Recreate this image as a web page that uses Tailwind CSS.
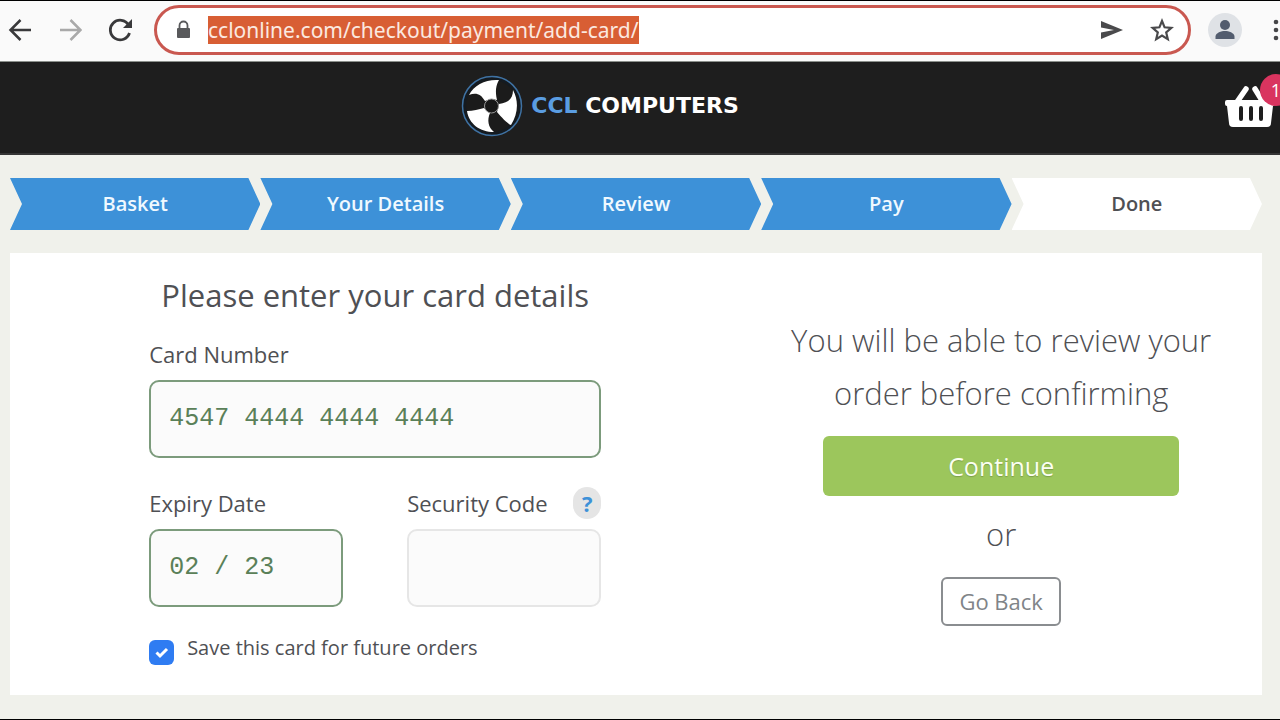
<!DOCTYPE html>
<html lang="en">
<head>
  <meta charset="UTF-8">
  <meta name="viewport" content="width=device-width, initial-scale=1.0">
  <title>CCL Computers - Add Card</title>
  <script src="https://cdn.jsdelivr.net/npm/@tailwindcss/browser@4"></script>
</head>
<body class="min-h-screen flex flex-col overflow-x-hidden bg-[#f0f1eb] border-y border-black font-['Open_Sans',sans-serif] text-[#4f5054]">

  <!-- Browser toolbar -->
  <div class="flex items-center h-[60px] bg-[#fafafa] pl-2 pb-[2px]">
    <nav class="flex items-center gap-[26px]" aria-label="Browser">
      <button aria-label="Back">
        <svg class="w-6 h-6" viewBox="0 0 24 24" fill="none" stroke="#39393b" stroke-width="2.5"><path d="M23 12H3M12.500 2L2.500 12l10 10"/></svg>
      </button>
      <button aria-label="Forward">
        <svg class="w-6 h-6" viewBox="0 0 24 24" fill="none" stroke="#a9a9a9" stroke-width="2.500"><path d="M2 12h20M12.500 2l10 10-10 10"/></svg>
      </button>
      <button aria-label="Reload">
        <svg class="w-6 h-6" viewBox="0 0 24 24" fill="none" stroke="#39393b" stroke-width="2.800"><path d="M20.600 7A9.800 9.800 0 1 0 21.500 15"/><path d="M24 1v9h-9z" fill="#39393b" stroke="none"/></svg>
      </button>
    </nav>
    <div class="flex flex-1 items-center h-[50px] ml-[22px] pl-[18px] pr-[14px] rounded-full border-[3px] border-[#c95850] bg-white">
      <svg class="w-4 h-5 shrink-0" viewBox="0 0 16 20"><rect x="2" y="8" width="13" height="10" rx="1" fill="#58595b"/><path d="M4.500 9V5.500a4 4 0 0 1 8 0V9" fill="none" stroke="#58595b" stroke-width="1.800"/></svg>
      <div class="flex flex-1 ml-[17px]">
        <span class="h-7 leading-7 bg-[#d85e34] text-[#fbe9e0] text-[21px] font-['Noto_Sans',sans-serif]">cclonline.com/checkout/payment/add-card/</span>
      </div>
      <button aria-label="Send">
        <svg class="w-6 h-6" viewBox="0 0 24 24" fill="#4a4a4c"><path d="M1 3l22 9-22 9v-6.500l13-2.500-13-2.500z"/></svg>
      </button>
      <button class="ml-[26px]" aria-label="Bookmark">
        <svg class="w-6 h-6" viewBox="0 0 24 24" fill="none" stroke="#4a4a4c" stroke-width="2.200"><path d="M12 3l2.600 6.300 6.800.6-5.200 4.500 1.600 6.700L12 17.500l-5.800 3.600 1.600-6.700-5.200-4.500 6.800-.6z"/></svg>
      </button>
    </div>
    <button class="ml-[17px] shrink-0" aria-label="Profile">
      <svg class="w-[34px] h-[34px]" viewBox="0 0 34 34"><circle cx="17" cy="17" r="17" fill="#dfe2e6"/><circle cx="17" cy="12" r="5" fill="#525c6e"/><path d="M7.500 26v-2.500c0-3.700 6-5.500 9.500-5.500s9.500 1.800 9.500 5.500V26z" fill="#525c6e"/></svg>
    </button>
    <button class="ml-[30px] -mr-[1px] shrink-0" aria-label="Menu">
      <svg class="w-[9px] h-6" viewBox="0 0 9 24" fill="#454547"><circle cx="4" cy="4" r="2.300"/><circle cx="4" cy="12" r="2.300"/><circle cx="4" cy="20" r="2.300"/></svg>
    </button>
  </div>

  <!-- Site header -->
  <header class="relative flex items-center h-[94px] bg-[#1e1e1e] border-t border-b-2 border-t-[#8c908c] border-b-[#353535]">
    <div class="flex flex-1 justify-center">
      <a href="#" class="flex items-center gap-2 -ml-20 -mt-1 font-['DejaVu_Sans',sans-serif] font-bold text-[22px] text-white">
        <svg class="w-[62px] h-[62px]" viewBox="0 0 62 62">
          <circle cx="31" cy="31" r="29.500" fill="#141a20" stroke="#3f72a3" stroke-width="1.500"/>
          <circle cx="31" cy="31" r="26" fill="#1b1b1b"/>
          <g fill="#fff">
            <path d="M8 20C13 10 25 4 38 5C35 10 34 16 36 25L31 24L24 26C20 19 15 17 8 20Z"/>
            <path d="M52 15C58 26 57 39 50 50C47 49 41 43 36 37L38 29C48 28 52 23 52 15Z"/>
            <path d="M6 36C8 49 19 57 33 57C27 52 26 45 29 38L23 33C18 34 12 36 6 36Z"/>
          </g>
          <circle cx="30.500" cy="31" r="7" fill="#171717" stroke="#999" stroke-width="1"/>
        </svg>
        <span><span class="text-[#5a9de2]">CCL</span> COMPUTERS</span>
      </a>
    </div>
    <a href="#" class="absolute right-1 top-[22px]" aria-label="Basket">
      <svg class="w-[52px] h-[44px]" viewBox="0 0 52 44">
        <path d="M13 18l9-13M39 18L31 5" stroke="#fff" stroke-width="5.500" stroke-linecap="round"/>
        <path d="M3 16h46a2 2 0 0 1 2 2v2a2 2 0 0 1-2 2l-2 17a4 4 0 0 1-4 4H9a4 4 0 0 1-4-4L3 22a2 2 0 0 1-2-2v-2a2 2 0 0 1 2-2z" fill="#fff"/>
        <path d="M17 24v11M27 24v11M37 24v11" stroke="#1e1e1e" stroke-width="4" stroke-linecap="round"/>
      </svg>
      <span class="absolute -top-[10px] -right-4 w-8 h-8 rounded-full bg-[#d9345f] text-white text-lg leading-8 text-center">1</span>
    </a>
  </header>

  <main class="pl-[10px] pr-[18px] pt-[23px] pb-5">
    <!-- Checkout steps -->
    <ol class="grid grid-cols-5 text-xl font-semibold text-center leading-[52px] text-[#f0f9ff]">
      <li class="bg-[#3d91d8] [clip-path:polygon(0_0,calc(100%_-_12px)_0,100%_50%,calc(100%_-_12px)_100%,0_100%,12px_50%)]">Basket</li>
      <li class="bg-[#3d91d8] [clip-path:polygon(0_0,calc(100%_-_12px)_0,100%_50%,calc(100%_-_12px)_100%,0_100%,12px_50%)]">Your Details</li>
      <li class="bg-[#3d91d8] [clip-path:polygon(0_0,calc(100%_-_12px)_0,100%_50%,calc(100%_-_12px)_100%,0_100%,12px_50%)]">Review</li>
      <li class="bg-[#3d91d8] [clip-path:polygon(0_0,calc(100%_-_12px)_0,100%_50%,calc(100%_-_12px)_100%,0_100%,12px_50%)]">Pay</li>
      <li class="bg-white text-[#4f5054] [clip-path:polygon(0_0,calc(100%_-_12px)_0,100%_50%,calc(100%_-_12px)_100%,0_100%,12px_50%)]">Done</li>
    </ol>

    <form class="grid grid-cols-12 mt-[23px] bg-white">
      <!-- Card details -->
      <div class="col-span-7 flex justify-center pt-5 pb-[30px]">
        <div class="w-[452px]">
          <h1 class="text-[31px] leading-[44px] text-center">Please enter your card details</h1>

          <label for="card" class="block mt-[19px] h-11 text-[22px] leading-9">Card Number</label>
          <input id="card" type="text" value="4547 4444 4444 4444" class="block w-full h-[78px] px-[18px] pb-[2px] rounded-[10px] border-2 border-[#7c9b7c] bg-[#fbfbfb] font-['Liberation_Mono',monospace] text-[25px] text-[#5a8058]">

          <div class="grid grid-cols-2 gap-16 mt-[27px]">
            <div>
              <label for="expiry" class="block h-11 text-[22px] leading-9">Expiry Date</label>
              <input id="expiry" type="text" value="02 / 23" class="block w-full h-[78px] px-[18px] pb-[2px] rounded-[10px] border-2 border-[#7c9b7c] bg-[#fbfbfb] font-['Liberation_Mono',monospace] text-[25px] text-[#5a8058]">
            </div>
            <div>
              <div class="flex items-start justify-between h-11">
                <label for="cvc" class="text-[22px] leading-9 whitespace-nowrap">Security Code</label>
                <button type="button" class="w-7 h-8 mt-[2px] rounded-full bg-[#e5e5e5] text-[#3d91d8] text-[22px] font-bold leading-8">?</button>
              </div>
              <input id="cvc" type="text" class="block w-full h-[78px] px-[18px] rounded-[10px] border-2 border-[#e6e6e6] bg-[#fbfbfb] font-['Liberation_Mono',monospace] text-[25px]">
            </div>
          </div>

          <div class="flex items-end gap-[13px] mt-[27px]">
            <span class="relative w-[25px] h-[25px]">
              <input id="save" type="checkbox" checked class="block appearance-none w-[25px] h-[25px] rounded-md bg-[#2f7cf2]">
              <svg class="absolute inset-0 w-[25px] h-[25px] pointer-events-none" viewBox="0 0 25 25" fill="none" stroke="#fff" stroke-width="3"><path d="M7.500 12.500l3.500 3.500 7-7"/></svg>
            </span>
            <label for="save" class="pb-[3px] text-xl leading-7">Save this card for future orders</label>
          </div>
        </div>
      </div>

      <!-- Actions -->
      <div class="col-span-5 flex flex-col items-center pt-[61px] text-[31px] leading-[53px] font-light text-center">
        <p class="w-[440px]">You will be able to review your order before confirming</p>
        <button type="submit" class="w-[356px] h-[60px] mt-4 rounded-md bg-[#9cc65c] text-[#fbfff2] text-[25px] font-normal leading-[60px] text-shadow-xs">Continue</button>
        <p class="mt-3">or</p>
        <button type="button" class="h-[49px] mt-4 px-4 rounded-md border-2 border-[#8a8d90] text-[#808488] text-[22px] font-normal leading-[45px]">Go Back</button>
      </div>
    </form>
  </main>
</body>
</html>
